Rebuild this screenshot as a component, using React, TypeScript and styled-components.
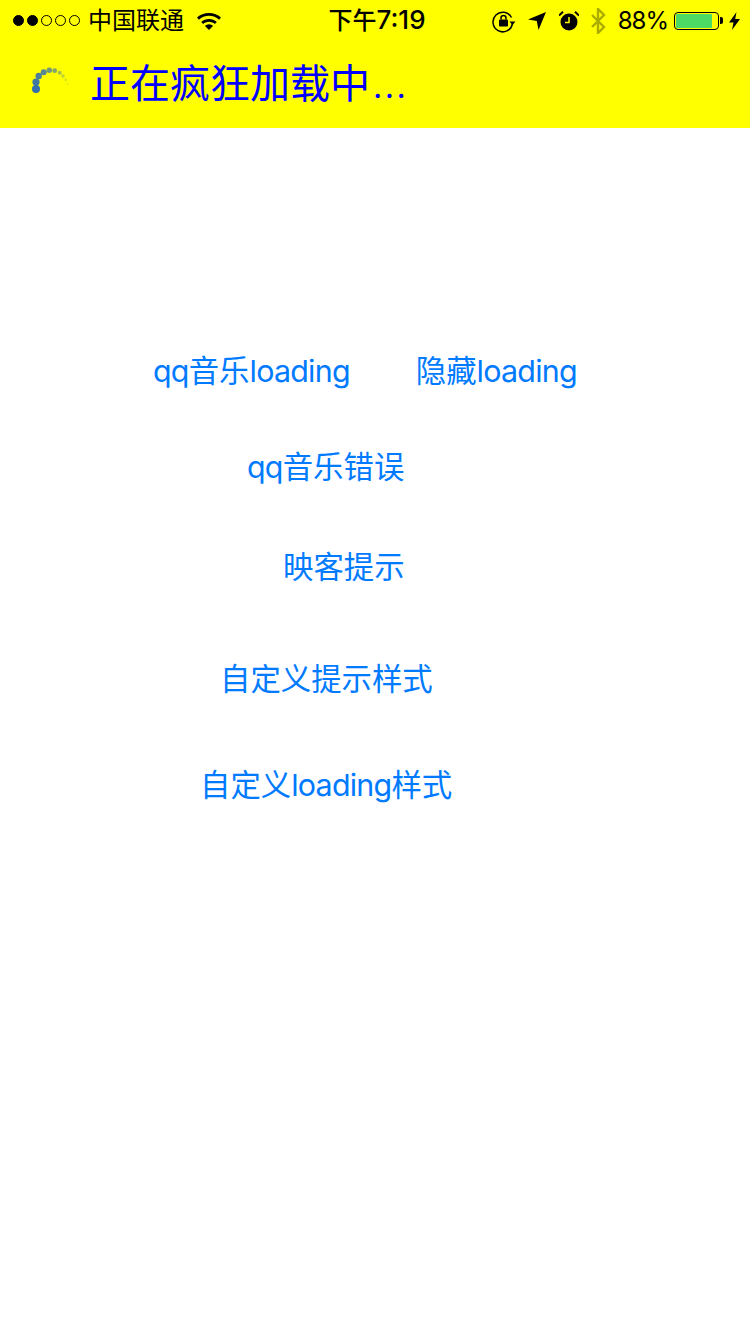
import styled, { createGlobalStyle } from "styled-components";

const GlobalStyle = createGlobalStyle`
  html, body {
    margin: 0;
    padding: 0;
    background: #fff;
    font-family: Inter, "Noto Sans CJK SC", sans-serif;
  }
`;

const Page = styled.div`
  width: 750px;
  height: 1334px;
  background: #fff;
  overflow: hidden;
`;

const Header = styled.header`
  background: #ff0;
  height: 128px;
`;

const StatusBar = styled.div`
  height: 40px;
  display: grid;
  grid-template-columns: 1fr auto 1fr;
  align-items: center;
  color: #000;
`;

const StatusLeft = styled.div`
  display: flex;
  align-items: center;
  padding-left: 13px;
`;

const StatusRight = styled.div`
  display: flex;
  align-items: center;
  justify-content: flex-end;
  padding-right: 10px;
`;

const Signal = styled.div`
  display: flex;
  gap: 3px;
  margin-right: 8px;
`;

const SignalDot = styled.span<{ $on: boolean }>`
  width: 11px;
  height: 11px;
  box-sizing: border-box;
  border-radius: 50%;
  border: 1px solid #000;
  background: ${(p) => (p.$on ? "#000" : "transparent")};
`;

const Carrier = styled.span`
  font-size: 24px;
  line-height: 40px;
  margin-right: 13px;
`;

const Clock = styled.span`
  font-size: 24px;
  line-height: 40px;
  font-weight: 500;
  padding-left: 4px;
`;

const ClockDigits = styled.span`
  font-size: 26px;
`;

const Percent = styled.span`
  font-size: 24px;
  line-height: 40px;
  letter-spacing: -1px;
  margin: 0 6px 0 12px;
`;

const Battery = styled.div`
  width: 45px;
  height: 18px;
  box-sizing: border-box;
  border: 1px solid #000;
  border-radius: 4px;
  padding: 1px 6px 1px 1px;
  display: flex;
`;

const BatteryLevel = styled.div`
  flex: 1;
  background: #4cd964;
  border-radius: 1px;
`;

const BatteryNub = styled.div`
  width: 3px;
  height: 7px;
  margin: 0 6px 0 1px;
  background: #000;
  border-radius: 0 2px 2px 0;
`;

const IconBox = styled.svg<{ $gap?: number }>`
  display: block;
  flex: none;
  margin-right: ${(p) => p.$gap ?? 0}px;
`;

const NavBar = styled.div`
  height: 88px;
  display: flex;
  align-items: center;
  padding-left: 26px;
`;

const NavTitle = styled.span`
  color: #00f;
  font-size: 40px;
  line-height: 48px;
  margin-left: 20px;
`;

const NavDots = styled.span`
  font-weight: 300;
  letter-spacing: 0.5px;
  margin-left: 2px;
`;

const Main = styled.main`
  padding-top: 213px;
`;

const Row = styled.div<{ $left: number; $top: number; $gap?: number }>`
  display: flex;
  height: 60px;
  align-items: center;
  margin-top: ${(p) => p.$top}px;
  padding-left: ${(p) => p.$left}px;
  gap: ${(p) => p.$gap ?? 0}px;
`;

const LinkButton = styled.button`
  appearance: none;
  border: 0;
  background: none;
  padding: 0;
  color: #007aff;
  font: inherit;
  font-size: 30.4px;
  line-height: 60px;
  white-space: nowrap;
`;

const Latin = styled.span`
  letter-spacing: -0.75px;
`;

const SPINNER = [
  [36, 89, 4, 0.9],
  [36, 82, 3.6, 0.85],
  [38.7, 76, 3.2, 0.8],
  [43.7, 72.3, 3, 0.75],
  [49.3, 70.3, 2.7, 0.65],
  [54.7, 70.7, 2.4, 0.55],
  [59.7, 72.7, 2, 0.4],
  [63, 76, 1.7, 0.3],
  [65.7, 79.7, 1.3, 0.2],
  [67.3, 84, 1, 0.12],
];

const Spinner = () => (
  <IconBox width="44" height="60" viewBox="26 54 44 60">
    {SPINNER.map(([x, y, r, o]) => (
      <circle key={x + y} cx={x} cy={y} r={r} fill="#1f5fc0" opacity={o} />
    ))}
  </IconBox>
);

const App = () => {
  return (
    <Page>
      <GlobalStyle />
      <Header>
        <StatusBar>
          <StatusLeft>
            <Signal>
              {[true, true, false, false, false].map((on, i) => (
                <SignalDot key={i} $on={on} />
              ))}
            </Signal>
            <Carrier>中国联通</Carrier>
            <IconBox width="24" height="18" viewBox="0 0 24 18">
              <path d="M0 5.600C3.200 2.600 7.400 1 12 1s8.800 1.600 12 4.600l-1.900 2.100C19.400 5.200 15.900 3.800 12 3.800S4.600 5.200 1.900 7.700z" />
              <path d="M4.200 10C6.300 8.100 9 7 12 7s5.700 1.100 7.800 3l-1.900 2.100C16.300 10.700 14.300 9.800 12 9.800s-4.300.9-5.900 2.300z" />
              <path d="M8 14c1-1 2.500-1.700 4-1.700s3 .7 4 1.700l-4 4z" />
            </IconBox>
          </StatusLeft>
          <Clock>
            下午<ClockDigits>7:19</ClockDigits>
          </Clock>
          <StatusRight>
            <IconBox width="24" height="24" viewBox="0 0 24 24" $gap={12}>
              <path d="M19.500 8.500A9.800 9.800 0 1 0 20.400 15" fill="none" stroke="#000" strokeWidth="1.500" />
              <path d="M17.500 12.500h6l-3 3.500z" />
              <rect x="7" y="10.500" width="9" height="7" rx="1" />
              <path d="M9 10.500V9a2.500 2.500 0 0 1 5 0v1.500" fill="none" stroke="#000" strokeWidth="1.500" />
            </IconBox>
            <IconBox width="18" height="18" viewBox="0 0 18 18" $gap={13}>
              <path d="M18 0L10.500 18l-1.700-9L0 7.500z" />
            </IconBox>
            <IconBox width="20" height="20" viewBox="0 0 20 20" $gap={11}>
              <circle cx="10" cy="11" r="8.500" />
              <path d="M10 6v5.500H6" fill="none" stroke="#ff0" strokeWidth="1.500" />
              <path d="M0 4.500L4 .8M20 4.500L16 .8" stroke="#000" strokeWidth="2" />
            </IconBox>
            <IconBox width="16" height="26" viewBox="0 0 16 26">
              <path d="M2 7l12 12-6 6V1l6 6L2 19" fill="none" stroke="#000" strokeOpacity="0.33" strokeWidth="2.400" />
            </IconBox>
            <Percent>88%</Percent>
            <Battery>
              <BatteryLevel />
            </Battery>
            <BatteryNub />
            <IconBox width="11" height="18" viewBox="0 0 11 18">
              <path d="M7.500 0L0 10.500h4.500L3 18l8-11H6.200z" />
            </IconBox>
          </StatusRight>
        </StatusBar>
        <NavBar>
          <Spinner />
          <NavTitle>
            正在疯狂加载中<NavDots>...</NavDots>
          </NavTitle>
        </NavBar>
      </Header>
      <Main>
        <Row $left={153} $top={0} $gap={66}>
          <LinkButton>
            <Latin>qq</Latin>音乐<Latin>loading</Latin>
          </LinkButton>
          <LinkButton>
            隐藏<Latin>loading</Latin>
          </LinkButton>
        </Row>
        <Row $left={247} $top={36}>
          <LinkButton>
            <Latin>qq</Latin>音乐错误
          </LinkButton>
        </Row>
        <Row $left={283} $top={40}>
          <LinkButton>映客提示</LinkButton>
        </Row>
        <Row $left={220} $top={52}>
          <LinkButton>自定义提示样式</LinkButton>
        </Row>
        <Row $left={200} $top={46}>
          <LinkButton>
            自定义<Latin>loading</Latin>样式
          </LinkButton>
        </Row>
      </Main>
    </Page>
  );
};

export default App;
